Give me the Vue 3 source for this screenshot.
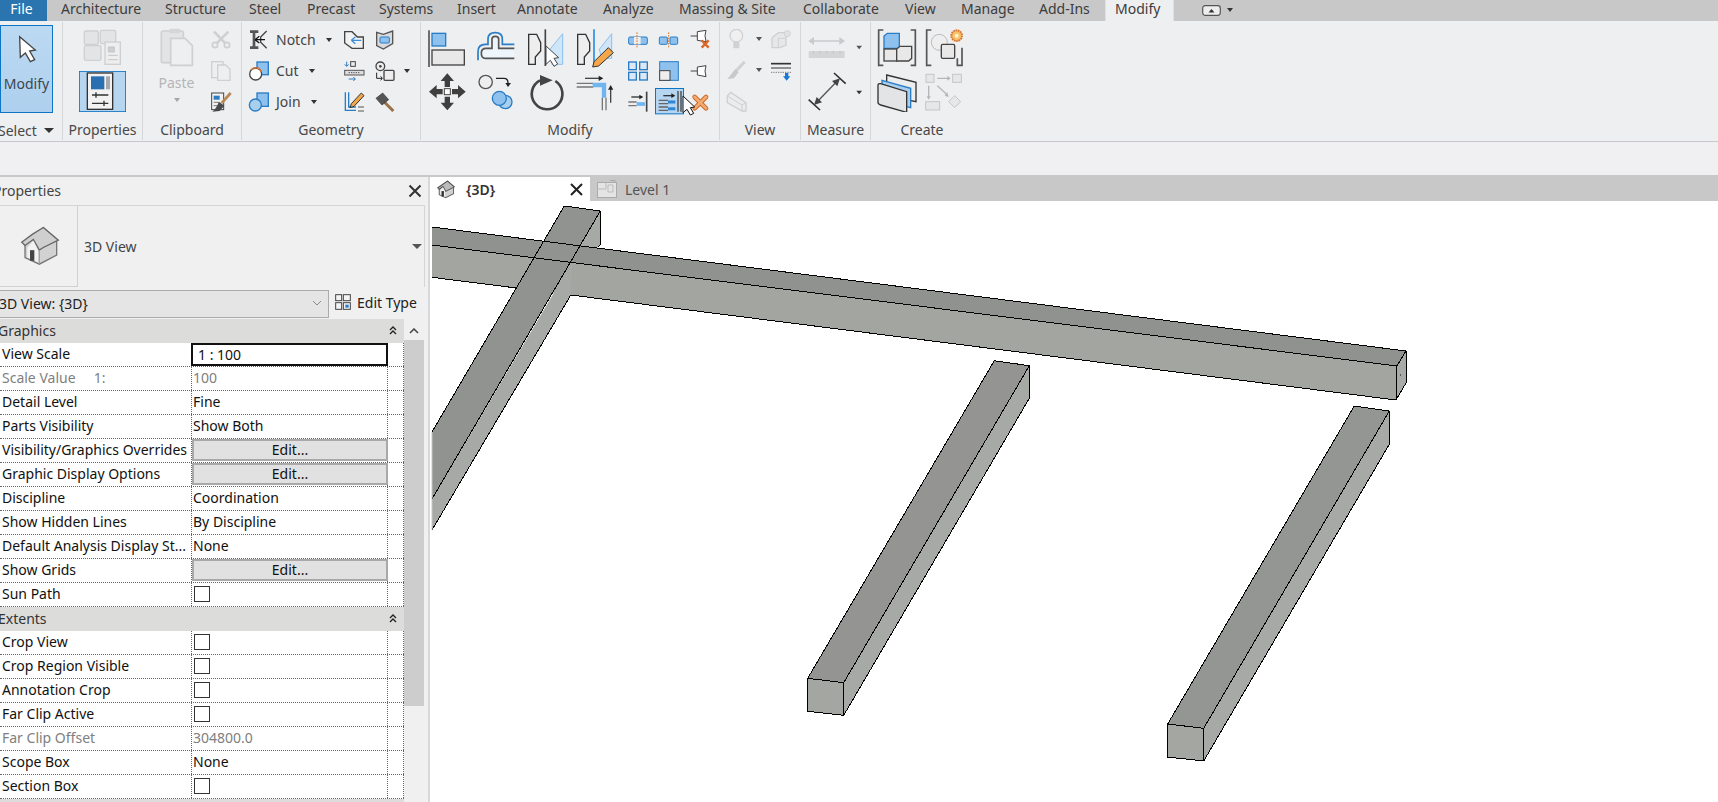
<script setup>
const tabs = [
  { name: 'Architecture', w: 104 },
  { name: 'Structure', w: 84 },
  { name: 'Steel', w: 58 },
  { name: 'Precast', w: 72 },
  { name: 'Systems', w: 78 },
  { name: 'Insert', w: 60 },
  { name: 'Annotate', w: 86 },
  { name: 'Analyze', w: 76 },
  { name: 'Massing & Site', w: 124 },
  { name: 'Collaborate', w: 102 },
  { name: 'View', w: 56 },
  { name: 'Manage', w: 78 },
  { name: 'Add-Ins', w: 78 }
]

const sections = [
  {
    name: 'Graphics',
    rows: [
      { label: 'View Scale', kind: 'input', value: '1 : 100' },
      { label: 'Scale Value     1:', value: '100', muted: true },
      { label: 'Detail Level', value: 'Fine' },
      { label: 'Parts Visibility', value: 'Show Both' },
      { label: 'Visibility/Graphics Overrides', kind: 'edit' },
      { label: 'Graphic Display Options', kind: 'edit' },
      { label: 'Discipline', value: 'Coordination' },
      { label: 'Show Hidden Lines', value: 'By Discipline' },
      { label: 'Default Analysis Display St...', value: 'None' },
      { label: 'Show Grids', kind: 'edit' },
      { label: 'Sun Path', kind: 'check' }
    ]
  },
  {
    name: 'Extents',
    rows: [
      { label: 'Crop View', kind: 'check' },
      { label: 'Crop Region Visible', kind: 'check' },
      { label: 'Annotation Crop', kind: 'check' },
      { label: 'Far Clip Active', kind: 'check' },
      { label: 'Far Clip Offset', value: '304800.0', muted: true },
      { label: 'Scope Box', value: 'None' },
      { label: 'Section Box', kind: 'check' }
    ]
  }
]
</script>

<template>
  <div class="app">
    <div class="tabbar">
      <div class="file-tab">File</div>
      <div v-for="t in tabs" :key="t.name" class="tab" :style="{ width: `${t.w}px` }">{{ t.name }}</div>
      <div class="tab active">Modify</div>
      <svg class="min-btn" width="19" height="11" viewBox="0 0 19 11"><rect x="0.7" y="0.7" width="17.6" height="9.6" rx="2.5" fill="#eee" stroke="#555" stroke-width="1.2"/><path d="M6.5 7.5 L9.5 4 L12.5 7.5Z" fill="#333"/></svg>
      <span class="caret dark min-caret"></span>
    </div>

    <div class="ribbon">
      <section class="panel p-select">
        <div class="body">
          <div class="modify-btn">
            <svg width="20" height="30" viewBox="50 95 60 90"><path d="M58 103 L60 165 L75 152 L90 178 L103 172 L88 146 L105 143Z" fill="#fff" stroke="#444" stroke-width="4"/></svg>
            <span>Modify</span>
          </div>
        </div>
        <div class="label select-label">Select <span class="caret dark"></span></div>
      </section>

      <section class="panel p-props">
        <div class="body props-body">
          <svg width="42" height="40" viewBox="240 80 126 120"><g fill="#e3e4e5" stroke="#cfd0d2" stroke-width="4"><rect x="250" y="92" width="42" height="40" rx="5"/><rect x="298" y="90" width="46" height="40" rx="5"/><rect x="250" y="136" width="50" height="44" rx="5"/><rect x="312" y="125" width="46" height="67" fill="#eee"/></g><path d="M322 140 H340 V155 H322Z M322 165 H350 M322 178 H350" fill="#cfd0d2" stroke="#c4c5c7" stroke-width="3"/></svg>
          <svg class="props-btn" width="47" height="41" viewBox="237 213 141 123"><rect x="238" y="214" width="139" height="121" fill="#b5d5f0" stroke="#0e74c4" stroke-width="3"/><rect x="262" y="219" width="76" height="109" fill="#f2f2f2" stroke="#333" stroke-width="4"/><rect x="273" y="229" width="40" height="39" fill="#2a70b0"/><rect x="318" y="229" width="12" height="39" fill="#a9a9a9"/><path d="M276 285 H325 M288 277 V293 M276 310 H325 M312 302 V318" fill="none" stroke="#333" stroke-width="4"/></svg>
        </div>
        <div class="label">Properties</div>
      </section>

      <section class="panel p-clip">
        <div class="body clip-body">
          <div class="paste">
            <svg width="37" height="40" viewBox="474 81 111 120"><rect x="484" y="90" width="66" height="95" rx="6" fill="#e3e4e5" stroke="#cfd0d2" stroke-width="5"/><rect x="508" y="83" width="32" height="14" rx="4" fill="#d5d6d8"/><path d="M512 112 H555 L577 134 V193 H512Z" fill="#eeeff0" stroke="#cfd0d2" stroke-width="5"/></svg>
            <span class="ghost-text">Paste</span>
            <span class="caret ghost"></span>
          </div>
          <div class="clip-col">
            <svg width="24" height="21" viewBox="630 84 72 63"><path d="M645 92 L680 128 M688 92 L652 128" stroke="#cfd0d2" stroke-width="8" fill="none"/><circle cx="648" cy="132" r="8" fill="none" stroke="#cfd0d2" stroke-width="5"/><circle cx="684" cy="132" r="8" fill="none" stroke="#cfd0d2" stroke-width="5"/></svg>
            <svg width="24" height="21" viewBox="630 177 72 63"><rect x="638" y="182" width="34" height="48" fill="#eeeff0" stroke="#cfd0d2" stroke-width="4"/><path d="M656 192 H680 L693 205 V238 H656Z" fill="#eeeff0" stroke="#cfd0d2" stroke-width="4"/></svg>
            <svg width="24" height="21" viewBox="630 270 72 63"><rect x="638" y="276" width="36" height="50" fill="#f2f2f2" stroke="#444" stroke-width="3"/><rect x="644" y="284" width="18" height="12" fill="#2a7dc4"/><path d="M644 304 H660 M644 314 H656" stroke="#777" stroke-width="3"/><path d="M695 276 L668 306" stroke="#b78a55" stroke-width="8"/><path d="M660 302 L676 314 L662 330 L640 332 Q652 322 660 302Z" fill="#4a4a4a"/></svg>
          </div>
        </div>
        <div class="label">Clipboard</div>
      </section>

      <section class="panel p-geo">
        <div class="body geo-body">
          <svg width="22" height="21" viewBox="741 84 66 63"><path d="M750 92 H775 M750 140 H775 M762 92 V140" stroke="#555" stroke-width="8" fill="none"/><path d="M800 90 L782 108 V124 L800 142" fill="none" stroke="#444" stroke-width="4"/><path d="M765 116 H795 M765 116 L778 106 M765 116 L778 126" stroke="#111" stroke-width="4" fill="none"/></svg>
          <div class="geo-text">Notch <span class="caret dark"></span></div>
          <svg width="23" height="21" viewBox="1029 84 69 63"><path d="M1034 92 H1056 L1072 108 H1090 V142 H1056 L1034 126Z" fill="#f2f2f2" stroke="#444" stroke-width="4"/><path d="M1084 118 H1054 M1054 118 L1066 108 M1054 118 L1066 128" stroke="#3a8fd8" stroke-width="4" fill="none"/></svg>
          <svg width="23" height="21" viewBox="1122 84 69 63"><path d="M1130 94 L1150 100 L1178 90 V128 L1150 144 L1130 134Z" fill="#d9dadc" stroke="#555" stroke-width="4"/><rect x="1140" y="108" width="28" height="18" rx="3" fill="#8ec1ee" stroke="#2a7dc4" stroke-width="3"/></svg>
          <span></span>

          <svg width="22" height="21" viewBox="741 177 66 63"><rect x="771" y="183" width="34" height="38" fill="#8ec1ee" stroke="#2a7dc4" stroke-width="4"/><circle cx="767" cy="219" r="18" fill="#fff" stroke="#444" stroke-width="4"/><path d="M753 207 A18 18 0 0 1 784 213" fill="none" stroke="#e0722a" stroke-width="4"/></svg>
          <div class="geo-text">Cut <span class="caret dark"></span></div>
          <svg width="23" height="21" viewBox="1029 177 69 63"><path d="M1040 182 V196 M1034 190 L1040 196 L1046 190" stroke="#2a7dc4" stroke-width="3" fill="none"/><rect x="1052" y="182" width="14" height="14" fill="#eee" stroke="#444" stroke-width="3"/><rect x="1034" y="208" width="58" height="14" fill="#ddd" stroke="#555" stroke-width="3"/><path d="M1046 215 H1080" stroke="#555" stroke-width="3" stroke-dasharray="4 3"/><path d="M1046 234 H1066 M1060 228 L1066 234 L1060 240" stroke="#2a7dc4" stroke-width="3" fill="none"/></svg>
          <svg width="23" height="21" viewBox="1122 177 69 63"><circle cx="1141" cy="196" r="13" fill="#eee" stroke="#444" stroke-width="4"/><circle cx="1141" cy="196" r="4" fill="#444"/><rect x="1152" y="208" width="30" height="30" rx="3" fill="#eee" stroke="#444" stroke-width="4"/><path d="M1130 215 V232 H1146 M1142 226 L1147 232 L1142 238" fill="none" stroke="#222" stroke-width="3"/></svg>
          <span class="caret dark cut-caret"></span>

          <svg width="22" height="21" viewBox="741 270 66 63"><rect x="771" y="276" width="34" height="40" fill="#8ec1ee" stroke="#2a7dc4" stroke-width="4"/><circle cx="766" cy="312" r="18" fill="#a9cfee" stroke="#2a7dc4" stroke-width="4"/></svg>
          <div class="geo-text">Join <span class="caret dark"></span></div>
          <svg width="23" height="21" viewBox="1029 270 69 63"><path d="M1036 274 V328 H1068 M1046 274 V318 H1068" fill="none" stroke="#2a7dc4" stroke-width="4"/><path d="M1054 308 L1084 276 L1092 284 L1062 316 L1050 320Z" fill="#f3a64a" stroke="#333" stroke-width="3"/><path d="M1074 318 H1092 M1074 330 H1092" stroke="#555" stroke-width="3"/></svg>
          <svg width="23" height="21" viewBox="1122 270 69 63"><path d="M1150 300 L1180 330" stroke="#9a7148" stroke-width="9"/><path d="M1128 292 L1148 276 L1166 296 L1146 312Z" fill="#555" stroke="#333" stroke-width="2"/></svg>
          <span></span>
        </div>
        <div class="label">Geometry</div>
      </section>

      <section class="panel p-mod">
        <div class="body mod-body">
          <div class="mod-large">
            <!-- align -->
            <svg width="49" height="42" viewBox="12 81 147 126"><path d="M27 88 V198" stroke="#555" stroke-width="5"/><rect x="36" y="97" width="41" height="38" fill="#8ec1ee" stroke="#2a7dc4" stroke-width="4"/><rect x="36" y="147" width="97" height="45" fill="#e8e8e8" stroke="#444" stroke-width="4"/></svg>
            <!-- offset -->
            <svg width="49" height="42" viewBox="159 81 147 126"><path d="M174 178 V152 Q174 130 196 130 H204 V114 Q204 95 226 95 Q247 95 247 114 V130 H283" fill="none" stroke="#2a7dc4" stroke-width="5"/><path d="M283 172 H196 Q184 172 184 156 Q184 142 198 142 H216 V114 Q216 106 226 106 Q236 106 236 114 V142 H283" fill="#eef5fb" stroke="#555" stroke-width="5"/></svg>
            <!-- mirror pick -->
            <svg width="49" height="42" viewBox="306 81 147 126"><path d="M326 100 H350 L362 125 V150 L346 168 V190 H326Z" fill="#eee" stroke="#333" stroke-width="4"/><path d="M376 85 V195" stroke="#444" stroke-width="5"/><path d="M428 98 V190 H396 V166 L390 145Z" fill="#cfe6f8" stroke="#8ec1ee" stroke-width="3"/><path d="M378 135 V190 L391 178 L402 196 L413 189 L402 172 L416 170Z" fill="#fff" stroke="#444" stroke-width="3"/></svg>
            <!-- mirror draw -->
            <svg width="49" height="42" viewBox="453 81 147 126"><path d="M473 100 H497 L509 125 V150 L493 168 V190 H473Z" fill="#eee" stroke="#333" stroke-width="4"/><path d="M522 85 V195" stroke="#4aa0e8" stroke-width="6"/><path d="M575 98 V172 H545 L538 145Z" fill="#cfe6f8" stroke="#8ec1ee" stroke-width="3"/><path d="M565 140 L580 155 L536 195 L518 198 L522 182Z" fill="#f3a64a" stroke="#333" stroke-width="3"/></svg>
            <!-- move -->
            <svg width="49" height="42" viewBox="12 207 147 126"><path d="M82 217 L102 240 H90 V258 H74 V240 H62Z M82 328 L102 305 H90 V287 H74 V305 H62Z M27 272 L50 252 V264 H68 V280 H50 V292Z M137 272 L114 252 V264 H96 V280 H114 V292Z" fill="#3f3f3f"/><rect x="73" y="263" width="18" height="18" fill="#fff" stroke="#444" stroke-width="3"/></svg>
            <!-- copy -->
            <svg width="49" height="42" viewBox="159 207 147 126"><circle cx="197" cy="243" r="20" fill="#eee" stroke="#555" stroke-width="4"/><path d="M228 232 H252 Q264 232 264 246" fill="none" stroke="#222" stroke-width="4"/><path d="M256 246 H273 L264 258Z" fill="#222"/><circle cx="256" cy="303" r="20" fill="#a9cfee" stroke="#2a7dc4" stroke-width="4"/><circle cx="238" cy="292" r="21" fill="#8ec1ee" stroke="#2a7dc4" stroke-width="4"/></svg>
            <!-- rotate -->
            <svg width="49" height="42" viewBox="306 207 147 126"><path d="M360 238 A46 46 0 1 0 406 240" fill="none" stroke="#444" stroke-width="8"/><path d="M360 222 L398 238 L360 254Z" fill="#444"/></svg>
            <!-- trim/extend -->
            <svg width="49" height="42" viewBox="453 207 147 126"><path d="M495 232 H540" stroke="#444" stroke-width="4"/><path d="M536 224 L550 232 L536 240Z" fill="#222"/><path d="M470 247 H520 M470 258 H520" stroke="#777" stroke-width="4"/><path d="M518 252 H552 V290" fill="none" stroke="#6fb5f0" stroke-width="13"/><path d="M547 290 V328 M558 290 V328" stroke="#777" stroke-width="4"/><path d="M572 262 V305" stroke="#444" stroke-width="4"/><path d="M564 266 L572 252 L580 266Z" fill="#222"/></svg>
          </div>
          <div class="mod-small">
            <!-- split -->
            <svg width="31" height="30" viewBox="612 81 93 90"><rect x="626" y="108" width="56" height="22" rx="4" fill="#8ec1ee" stroke="#2a7dc4" stroke-width="3"/><rect x="642" y="108" width="20" height="22" fill="#eee"/><path d="M651 94 V142" stroke="#d8762e" stroke-width="3" stroke-dasharray="5 3"/></svg>
            <svg width="31" height="30" viewBox="705 81 93 90"><rect x="718" y="108" width="24" height="22" rx="3" fill="#8ec1ee" stroke="#2a7dc4" stroke-width="3"/><rect x="750" y="108" width="23" height="22" rx="3" fill="#8ec1ee" stroke="#2a7dc4" stroke-width="3"/><path d="M746 94 V142" stroke="#d8762e" stroke-width="3" stroke-dasharray="5 3"/></svg>
            <svg width="31" height="30" viewBox="798 81 93 90"><path d="M812 105 H832 M832 92 L858 88 L855 104 L858 122 L832 118Z" fill="#fff" stroke="#444" stroke-width="3"/><path d="M845 118 L866 140 M866 118 L845 140" stroke="#d8662a" stroke-width="7"/></svg>

            <svg width="31" height="30" viewBox="612 171 93 90"><g fill="#dbe8f5" stroke="#2a7dc4" stroke-width="4"><rect x="626" y="183" width="23" height="23"/><rect x="659" y="183" width="23" height="23"/><rect x="626" y="214" width="23" height="23"/><rect x="659" y="214" width="23" height="23"/></g></svg>
            <svg width="31" height="30" viewBox="705 171 93 90"><rect x="719" y="182" width="56" height="56" fill="#8ec1ee" stroke="#2a7dc4" stroke-width="3"/><rect x="719" y="209" width="31" height="29" fill="#eee" stroke="#444" stroke-width="3"/></svg>
            <svg width="31" height="30" viewBox="798 171 93 90"><path d="M812 210 H832 M832 198 L858 194 L855 210 L858 227 L832 222Z" fill="#fff" stroke="#444" stroke-width="3"/></svg>

            <svg width="31" height="30" viewBox="612 261 93 90"><path d="M634 288 H662" stroke="#333" stroke-width="4"/><path d="M658 281 L670 288 L658 295Z" fill="#222"/><path d="M625 303 H650 M625 314 H650" stroke="#777" stroke-width="4"/><path d="M650 309 H675" stroke="#6fb5f0" stroke-width="11"/><path d="M680 272 V332" stroke="#444" stroke-width="5"/></svg>
            <svg width="31" height="30" viewBox="705 261 93 90"><rect x="706.5" y="262.5" width="84" height="76" fill="#b5d5f0" stroke="#0e74c4" stroke-width="3"/><path d="M730 284 H758" stroke="#333" stroke-width="4"/><path d="M754 277 L766 284 L754 291Z" fill="#222"/><path d="M716 298 H744 M716 308 H744 M716 318 H744 M716 328 H744" stroke="#666" stroke-width="4"/><path d="M744 303 H766 M744 323 H766" stroke="#2f86d6" stroke-width="9"/><path d="M774 270 V332 M783 270 V332" stroke="#444" stroke-width="4"/></svg>
            <svg width="31" height="30" viewBox="798 261 93 90"><path d="M824 288 L858 322 M858 288 L824 322" stroke="#d06c28" stroke-width="14" stroke-linecap="round"/><path d="M824 288 L858 322 M858 288 L824 322" stroke="#f4ab72" stroke-width="8" stroke-linecap="round"/></svg>
            <svg class="cursor" width="14" height="21" viewBox="785 282 42 63"><path d="M788 285 V335 L800 325 L810 342 L820 337 L810 320 L823 318Z" fill="#fff" stroke="#111" stroke-width="3"/></svg>
          </div>
        </div>
        <div class="label">Modify</div>
      </section>

      <section class="panel p-view">
        <div class="body view-body">
          <svg width="23" height="21" viewBox="45 84 69 63"><circle cx="79" cy="104" r="19" fill="#f0f0f1" stroke="#d0d1d3" stroke-width="4"/><rect x="70" y="122" width="18" height="20" rx="3" fill="#d0d1d3"/></svg>
          <span class="caret dim"></span>
          <svg width="23" height="21" viewBox="180 84 69 63"><path d="M186 110 L205 95 H228 V132 L210 140 H186Z" fill="#e6e7e8" stroke="#cfd0d2" stroke-width="4"/><path d="M205 112 H228 M205 112 V140" stroke="#cfd0d2" stroke-width="3"/><circle cx="232" cy="98" r="9" fill="#e2e3e4" stroke="#cfd0d2" stroke-width="3"/></svg>

          <svg width="23" height="21" viewBox="45 177 69 63"><path d="M104 182 L78 210" stroke="#d0d1d3" stroke-width="9"/><path d="M76 204 L86 214 L72 232 L52 234 Z" fill="#c8c9cb"/></svg>
          <span class="caret dim"></span>
          <svg width="23" height="21" viewBox="180 177 69 63"><path d="M183 188 H243" stroke="#333" stroke-width="5"/><path d="M183 201 H243" stroke="#333" stroke-width="3"/><path d="M183 214 H243" stroke="#444" stroke-width="2" stroke-dasharray="4 3"/><path d="M225 216 H235 V226 H241 L230 239 L219 226 H225Z" fill="#1a78d4"/></svg>

          <svg width="23" height="21" viewBox="45 270 69 63"><path d="M52 285 L62 274 L108 305 V330 L96 330 L52 305Z" fill="#ececed" stroke="#cfd0d2" stroke-width="4"/><path d="M52 285 L96 312 L108 305 M96 312 V330" fill="none" stroke="#cfd0d2" stroke-width="3"/></svg>
          <span></span><span></span>
        </div>
        <div class="label">View</div>
      </section>

      <section class="panel p-measure">
        <div class="body measure-body">
          <svg width="60" height="42" viewBox="288 81 180 126"><path d="M300 120 H400" stroke="#c9cacc" stroke-width="4"/><path d="M295 120 L312 108 V132Z M405 120 L388 108 V132Z" fill="#c9cacc"/><rect x="296" y="150" width="108" height="21" rx="2" fill="#d4d5d7"/><path d="M310 150 V158 M330 150 V158 M350 150 V158 M370 150 V158 M390 150 V158" stroke="#bbb" stroke-width="2"/><path d="M439 134 H456 L447.5 145Z" fill="#555"/></svg>
          <svg width="60" height="42" viewBox="288 207 180 126"><path d="M296 296 L330 327 M372 216 L407 248" stroke="#333" stroke-width="5"/><path d="M318 306 L384 238" stroke="#555" stroke-width="4"/><path d="M390 232 L366 240 L382 256Z M312 312 L336 304 L320 288Z" fill="#444"/><path d="M439 269 H456 L447.5 280Z" fill="#333"/></svg>
        </div>
        <div class="label">Measure</div>
      </section>

      <section class="panel p-create">
        <div class="body create-body">
          <svg width="42" height="42" viewBox="498 81 126 126"><path d="M520 87 H506 V193 H520 M602 87 H616 V193 H602" fill="none" stroke="#555" stroke-width="5"/><path d="M522 105 L532 97 H568 V142 H522Z" fill="#8ec1ee" stroke="#2a7dc4" stroke-width="4"/><rect x="522" y="144" width="38" height="36" fill="#e8e8e8" stroke="#444" stroke-width="4"/><path d="M560 144 L570 136 H605 V172 L596 180 H560Z" fill="#e8e8e8" stroke="#444" stroke-width="4"/></svg>
          <svg width="42" height="42" viewBox="642 81 126 126"><path d="M664 87 H650 V193 H664 M742 172 V193 H756 V140" fill="none" stroke="#555" stroke-width="5"/><circle cx="688" cy="124" r="24" fill="#eee" stroke="#bbb" stroke-width="3"/><rect x="694" y="130" width="40" height="42" rx="4" fill="#e8e8e8" stroke="#444" stroke-width="4"/><circle cx="740" cy="104" r="16" fill="#f7c26a" stroke="#d8762e" stroke-width="6" stroke-dasharray="5 2"/><circle cx="740" cy="104" r="6" fill="#fff3c8"/></svg>
          <svg width="42" height="42" viewBox="498 207 126 126"><path d="M530 222 L618 244 V302 L530 284Z" fill="#eceded" stroke="#333" stroke-width="4"/><path d="M516 238 L602 262 V320 L516 298Z" fill="#a9cfee" stroke="#2a7dc4" stroke-width="4"/><path d="M504 252 Q504 247 512 248 L590 272 V334 L512 312 Q504 310 504 304Z" fill="#e3e4e5" stroke="#333" stroke-width="4"/></svg>
          <svg width="42" height="42" viewBox="642 207 126 126"><g fill="#e6e7e8" stroke="#c4c5c7" stroke-width="3"><rect x="648" y="220" width="24" height="24"/><rect x="728" y="220" width="26" height="24"/><rect x="647" y="302" width="42" height="25"/><path d="M734 284 L752 302 L734 320 L716 302Z"/></g><path d="M682 232 H716 M656 254 V290 M682 254 L710 280" stroke="#b5b6b8" stroke-width="4" fill="none"/><path d="M712 225 L722 232 L712 239Z M650 286 H662 L656 296Z M704 284 L716 288 L712 274Z" fill="#b5b6b8"/></svg>
        </div>
        <div class="label">Create</div>
      </section>
    </div>

    <div class="options-bar"></div>

    <div class="workspace">
      <aside class="props">
        <div class="props-head">
          <span class="props-title">Properties</span>
          <svg width="14" height="14" viewBox="0 0 14 14"><path d="M1.5 1.5 L12.5 12.5 M12.5 1.5 L1.5 12.5" stroke="#333" stroke-width="2"/></svg>
        </div>
        <div class="type-box">
          <div class="type-icon">
            <svg width="40" height="42" viewBox="50 165 120 125"><path d="M65 215 V262 L108 282 L160 255 V208 L120 172Z" fill="#d2d2d2" stroke="#777" stroke-width="4"/><path d="M55 216 L88 192 L120 172 L165 210 L120 232 L108 240 L90 208 L65 226Z" fill="#cfcfcf" stroke="#666" stroke-width="4"/><path d="M108 240 V282" stroke="#999" stroke-width="3"/><path d="M72 232 L90 212 L104 240 V276 L72 262Z" fill="#f2f2f2"/><rect x="80" y="240" width="13" height="32" fill="#444"/></svg>
          </div>
          <span class="type-name">3D View</span>
          <span class="caret big"></span>
        </div>
        <div class="selector-row">
          <div class="selector">
            <span>3D View: {3D}</span>
            <svg width="10" height="6" viewBox="0 0 10 6"><path d="M1 1 L5 5 L9 1" fill="none" stroke="#888" stroke-width="1"/></svg>
          </div>
          <div class="edit-type">
            <svg width="16" height="16" viewBox="1005 372 48 48"><g fill="#f4f4f4" stroke="#444" stroke-width="3"><rect x="1007" y="374" width="18" height="18"/><rect x="1030" y="374" width="21" height="18"/><rect x="1007" y="398" width="18" height="20"/><rect x="1030" y="398" width="21" height="20"/></g><rect x="1036" y="404" width="10" height="9" fill="#2a7dc4"/></svg>
            <span>Edit Type</span>
          </div>
        </div>
        <div class="grid-wrap">
          <div class="prop-table">
            <template v-for="s in sections" :key="s.name">
              <div class="sec-head">
                <span>{{ s.name }}</span>
                <svg width="8" height="9" viewBox="0 0 8 9"><path d="M1 4 L4 1 L7 4 M1 8 L4 5 L7 8" fill="none" stroke="#222" stroke-width="1.3"/></svg>
              </div>
              <div v-for="r in s.rows" :key="r.label" class="prop-row" :class="{ muted: r.muted }">
                <div class="prop-label">{{ r.label }}</div>
                <div class="prop-value">
                  <div v-if="r.kind === 'input'" class="scale-input">{{ r.value }}</div>
                  <div v-else-if="r.kind === 'edit'" class="edit-btn">Edit...</div>
                  <div v-else-if="r.kind === 'check'" class="check"></div>
                  <span v-else>{{ r.value }}</span>
                </div>
                <div class="prop-extra"></div>
              </div>
            </template>
            <div class="sec-head"></div>
          </div>
          <div class="scrollbar">
            <svg width="10" height="6" viewBox="0 0 10 6"><path d="M1 5 L5 1 L9 5" fill="none" stroke="#444" stroke-width="1.5"/></svg>
            <div class="thumb"></div>
          </div>
        </div>
      </aside>

      <main class="view">
        <div class="view-tabs">
          <div class="view-tab current">
            <svg width="18" height="19" viewBox="50 165 120 125"><path d="M65 215 V262 L108 282 L160 255 V208 L120 172Z" fill="#d2d2d2" stroke="#666" stroke-width="7"/><path d="M55 216 L120 172 L165 210 L108 240 L90 208 L65 226Z" fill="#bcbcbc" stroke="#555" stroke-width="7"/><path d="M72 232 L90 212 L104 240 V276 L72 262Z" fill="#f2f2f2"/><rect x="80" y="238" width="16" height="36" fill="#333"/></svg>
            <b>{3D}</b>
            <svg class="tab-x" width="13" height="13" viewBox="0 0 13 13"><path d="M1 1 L12 12 M12 1 L1 12" stroke="#222" stroke-width="2"/></svg>
          </div>
          <div class="view-tab other">
            <svg width="20" height="18" viewBox="0 0 20 18"><rect x="0.5" y="2.5" width="19" height="15" fill="#e4e4e4" stroke="#aaa"/><path d="M9 2.5 V9 H0.5 M11 5 H16 V12 H11Z" fill="none" stroke="#bbb"/><path d="M13 0.5 H18 V3" fill="none" stroke="#aaa"/></svg>
            <span>Level 1</span>
          </div>
        </div>
        <svg class="scene" width="1288" height="601" viewBox="430 201 1288 601">
          <!-- long beam -->
          <path d="M1406 351 L1406 383 L1396 400 L1397 366Z" fill="#a8aaa8"/>
          <path d="M432 245 L1397 366 L1396 400 L432 277.3Z" fill="#a3a5a0"/>
          <path d="M432 227 L1406 351 L1397 366 L432 245Z" fill="#909290"/>
          <!-- crossing beam -->
          <path d="M600.3 211 L600.3 245 L597.7 247.5 L580 246Z" fill="#a7a9a7"/>
          <path d="M571.7 262.7 L570.8 295 L432 530 L432 499Z" fill="#a7a9a7"/>
          <path d="M564.3 206 L600.3 211 L432 499 L432 432Z" fill="#919390"/>
          <g stroke="#000" fill="none" stroke-width="1" shape-rendering="crispEdges">
            <path d="M432 227 L1406 351 L1406 383 L1396 400 L570.8 295"/>
            <path d="M432 245 L1397 366 L1396 400 M1397 366 L1406 351"/>
            <path d="M432 277.3 L516.3 288"/>
            <path d="M432 432 L564.3 206 L600.3 211 L600.3 245 L597.7 247.5"/>
            <path d="M600.3 211 L432 499"/>
            <path d="M570.8 295 L432 530"/>
          </g>
          <rect x="1400" y="374.5" width="1" height="1" fill="#000"/>
          <path d="M432 432 V530" stroke="#c6c6c6"/>
          <!-- beam at centre -->
          <path d="M1029.3 365.7 L1029.3 398.3 L843.7 715.3 L843.7 682.7Z" fill="#a7a9a7"/>
          <path d="M994.3 360.7 L1029.3 365.7 L843.7 682.7 L807.7 678.3Z" fill="#949593"/>
          <path d="M807.7 678.3 L843.7 682.7 L843.7 715.3 L807.3 711.3Z" fill="#a4a6a1"/>
          <g stroke="#000" fill="none" stroke-width="1" shape-rendering="crispEdges">
            <path d="M807.7 678.3 L994.3 360.7 L1029.3 365.7 L1029.3 398.3 L843.7 715.3 L807.3 711.3 Z"/>
            <path d="M1029.3 365.7 L843.7 682.7 L807.7 678.3 M843.7 682.7 V715.3"/>
          </g>
          <!-- beam at right -->
          <path d="M1389.3 411 L1389.3 444.3 L1203.7 761 L1203.7 728.3Z" fill="#a7a9a7"/>
          <path d="M1354.3 406 L1389.3 411 L1203.7 728.3 L1167.7 724Z" fill="#939692"/>
          <path d="M1167.7 724 L1203.7 728.3 L1203.7 761 L1167.3 757Z" fill="#a4a6a1"/>
          <g stroke="#000" fill="none" stroke-width="1" shape-rendering="crispEdges">
            <path d="M1167.7 724 L1354.3 406 L1389.3 411 L1389.3 444.3 L1203.7 761 L1167.3 757 Z"/>
            <path d="M1389.3 411 L1203.7 728.3 L1167.7 724 M1203.7 728.3 V761"/>
          </g>
        </svg>
      </main>
    </div>
  </div>
</template>

<style>
html, body { margin: 0; padding: 0; overflow: hidden; }
</style>

<style scoped>
.app {
  width: 1718px;
  height: 802px;
  overflow: hidden;
  display: flex;
  flex-direction: column;
  font-family: "Noto Sans", "Open Sans", sans-serif;
  font-size: 14px;
  color: #111;
  background: #f0f0f2;
}

/* top tabs */
.tabbar {
  height: 21px;
  flex: none;
  display: flex;
  align-items: stretch;
  background: #c8c8c8;
  font-size: 14px;
  color: #3c3c3c;
  line-height: 18px;
}
.file-tab {
  width: 47px;
  text-align: center;
  padding-right: 4px;
  box-sizing: border-box;
  background: #2a75b0;
  color: #fff;
  margin-right: 2px;
}
.tab { padding-left: 12px; box-sizing: border-box; white-space: nowrap; }
.tab.active {
  width: 69px;
  background: #eeeff1;
  padding-left: 9px;
  border-left: 1px solid #e0e0e0;
  border-right: 1px solid #e0e0e0;
}
.min-btn { margin: 5px 0 0 28px; }
.min-caret { margin: 8px 0 0 6px; }

.caret {
  display: inline-block;
  width: 0;
  height: 0;
  border-left: 3px solid transparent;
  border-right: 3px solid transparent;
  border-top: 4px solid #bbb;
}
.caret.dark { border-top-color: #333; }
.caret.dim { border-top-color: #555; justify-self: center; }
.caret.big { border-left-width: 5px; border-right-width: 5px; border-top-width: 5px; border-top-color: #555; }

/* ribbon */
.ribbon {
  height: 121px;
  box-sizing: border-box;
  flex: none;
  display: flex;
  background: #eeeff1;
  border-bottom: 1px solid #c8c8cc;
  font-size: 14px;
  color: #444;
}
.panel {
  display: flex;
  flex-direction: column;
  box-sizing: border-box;
  border-right: 1px solid #d5d6d8;
  margin-top: 1px;
  margin-bottom: 1px;
}
.body { height: 98px; flex: none; box-sizing: border-box; }
.label {
  height: 20px;
  line-height: 19px;
  text-align: center;
  color: #484848;
  white-space: nowrap;
}
.p-select { width: 63px; }
.p-props { width: 80px; }
.p-clip { width: 99px; }
.p-geo { width: 179px; }
.p-mod { width: 299px; }
.p-view { width: 81px; }
.p-measure { width: 70px; }
.p-create { width: 102px; border-right: none; }

.modify-btn {
  width: 53px;
  height: 88px;
  margin-top: 3px;
  box-sizing: border-box;
  background: linear-gradient(#bcd9f2, #aed0ee);
  border: 1px solid #0e74c4;
  display: flex;
  flex-direction: column;
  align-items: center;
  padding-top: 8px;
  color: #3c4650;
  line-height: 18px;
}
.modify-btn span { margin-top: 11px; }
.select-label { text-align: left; margin-left: -2px; display: flex; align-items: center; gap: 7px; }
.select-label .caret { border-left-width: 5px; border-right-width: 5px; border-top-width: 5px; }

.props-body { display: flex; flex-direction: column; align-items: center; padding-top: 5px; padding-right: 1px; gap: 4px; }

.clip-body { display: flex; padding: 6px 0 0 15px; }
.paste { width: 37px; display: flex; flex-direction: column; align-items: center; }
.ghost-text { color: #b4b5b7; margin-top: 6px; line-height: 18px; }
.paste .caret { margin-top: 6px; border-top-color: #a5a6a8; }
.clip-col { display: flex; flex-direction: column; gap: 10px; margin: 1px 0 0 14px; }

.geo-body {
  display: grid;
  grid-template-columns: 22px 74px 31px 31px 12px;
  grid-auto-rows: 31px;
  padding: 7px 0 0 5px;
  align-items: start;
}
.geo-text { padding-left: 7px; height: 21px; line-height: 20px; display: flex; align-items: center; gap: 10px; }
.geo-text .caret { flex: none; }
.cut-caret { margin: 9px 0 0 -1px; }

.mod-body { display: flex; padding: 6px 0 0 3px; }
.mod-large { display: grid; grid-template-columns: repeat(4, 49px); grid-auto-rows: 42px; }
.mod-small { display: grid; grid-template-columns: repeat(3, 31px); grid-auto-rows: 30px; margin-left: 4px; position: relative; }
.mod-large svg, .mod-small svg { display: block; }
.mod-small .cursor { position: absolute; left: 58px; top: 67px; }

.view-body {
  display: grid;
  grid-template-columns: 23px 22px 23px;
  grid-auto-rows: 31px;
  padding: 7px 0 0 5px;
  align-items: start;
}
.view-body .caret { margin-top: 8px; }

.measure-body { display: flex; flex-direction: column; padding: 6px 0 0 5px; }
.measure-body svg { display: block; }
.create-body { display: grid; grid-template-columns: 42px 42px; column-gap: 6px; grid-auto-rows: 42px; padding: 6px 0 0 5px; }
.create-body svg { display: block; }

.options-bar {
  height: 35px;
  box-sizing: border-box;
  flex: none;
  background: #f0f0f2;
  border-bottom: 2px solid #c8c8c8;
}

/* properties */
.workspace { flex: 1; display: flex; min-height: 0; }
.props {
  width: 430px;
  flex: none;
  box-sizing: border-box;
  background: #f0f0f0;
  border-right: 2px solid #d8d8dc;
  display: flex;
  flex-direction: column;
  overflow: hidden;
  padding-right: 3px;
  color: #222;
}
.props-head {
  height: 28px;
  flex: none;
  display: flex;
  align-items: center;
  justify-content: space-between;
  padding-right: 3px;
  box-sizing: border-box;
  color: #444;
}
.props-title { margin-left: -7px; padding-bottom: 2px; }
.type-box {
  height: 82px;
  flex: none;
  display: flex;
  align-items: center;
  border-top: 1px solid #d5d5d5;
  border-right: 1px solid #d5d5d5;
  box-sizing: border-box;
  color: #444;
}
.type-icon {
  width: 78px;
  height: 81px;
  box-sizing: border-box;
  border-right: 1px solid #d0d0d0;
  border-bottom: 1px solid #d0d0d0;
  display: flex;
  align-items: center;
  justify-content: center;
  padding-left: 2px;
}
.type-name { margin-left: 6px; flex: 1; }
.type-box .caret { margin-right: 2px; }
.selector-row { height: 32px; flex: none; display: flex; align-items: flex-start; padding-top: 3px; box-sizing: border-box; }
.selector {
  width: 329px;
  height: 28px;
  box-sizing: border-box;
  background: #e5e5e5;
  border: 1px solid #ababab;
  border-left: none;
  display: flex;
  align-items: center;
  justify-content: space-between;
  padding-right: 6px;
  padding-bottom: 2px;
}
.selector span { margin-left: -1px; }
.edit-type { display: flex; align-items: center; gap: 6px; margin-left: 6px; height: 24px; }

.grid-wrap { display: flex; flex: 1; min-height: 0; }
.prop-table { width: 404px; flex: none; background: #fff; }
.sec-head {
  height: 24px;
  background: #dcdcda;
  display: flex;
  align-items: center;
  justify-content: space-between;
  padding-right: 7px;
  padding-bottom: 1px;
  box-sizing: border-box;
  color: #333;
}
.sec-head span { margin-left: -2px; }
.prop-row {
  height: 24px;
  display: grid;
  grid-template-columns: 191px 197px 16px;
  box-sizing: border-box;
  border-bottom: 1px dotted #666;
  line-height: 22px;
  color: #111;
}
.prop-row.muted { color: #808080; }
.prop-label { padding-left: 2px; white-space: pre; overflow: hidden; }
.prop-value { border-left: 1px dotted #666; border-right: 1px dotted #666; padding-left: 1px; }
.prop-extra { border-right: 1px dotted #666; }
.scale-input {
  height: 23px;
  margin: 0 -1px 0 -2px;
  box-sizing: border-box;
  border: 2px solid #111;
  padding-left: 5px;
  background: #fff;
  line-height: 19px;
}
.edit-btn {
  height: 22px;
  margin: 0 -1px 0 -1px;
  box-sizing: border-box;
  background: #e1e1e1;
  border: 2px solid #a9a9a9;
  text-align: center;
  line-height: 18px;
}
.check {
  width: 16px;
  height: 16px;
  margin: 3px 0 0 1px;
  box-sizing: border-box;
  border: 1px solid #333;
  background: #fff;
}
.scrollbar { width: 20px; flex: none; display: flex; flex-direction: column; align-items: center; }
.scrollbar svg { margin-top: 9px; }
.thumb { width: 20px; height: 366px; margin-top: 6px; background: #cdcdcd; }

/* view */
.view { flex: 1; min-width: 0; display: flex; flex-direction: column; background: #fff; }
.view-tabs { height: 24px; flex: none; display: flex; background: #c8c8c8; }
.view-tab { display: flex; align-items: center; box-sizing: border-box; white-space: nowrap; }
.view-tab.current { width: 160px; background: #fff; padding-left: 7px; color: #333; }
.view-tab.current b { margin-left: 11px; font-size: 14px; font-weight: 600; }
.tab-x { margin-left: auto; margin-right: 7px; }
.view-tab.other { padding-left: 7px; color: #555; }
.view-tab.other span { margin-left: 8px; }
.scene { display: block; flex: none; }
</style>
